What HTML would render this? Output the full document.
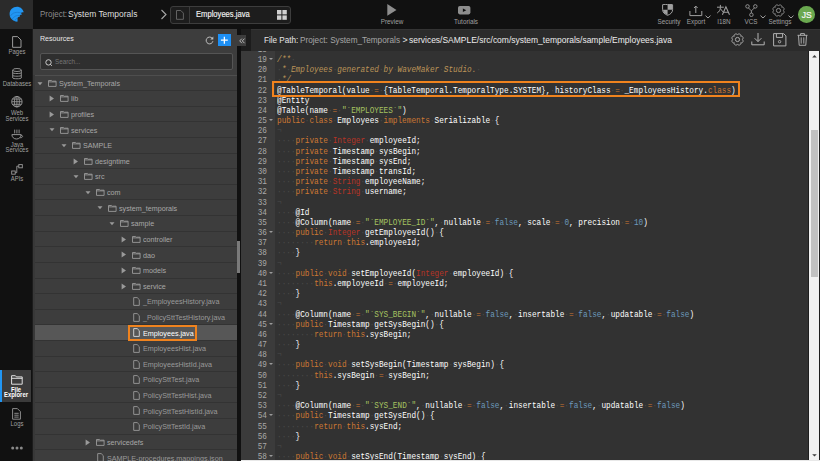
<!DOCTYPE html>
<html><head><meta charset="utf-8"><style>
*{box-sizing:border-box}
html,body{margin:0;padding:0}
body{width:820px;height:461px;overflow:hidden;position:relative;background:#111;font-family:"Liberation Sans",sans-serif}
.a{position:absolute}
.t{position:absolute;white-space:nowrap;line-height:1}
#top{left:0;top:0;width:820px;height:29px;background:#111}
#logo{left:0;top:0;width:33px;height:29px;background:#2b2b2b}
#side{left:0;top:29px;width:32px;height:432px;background:#111}
#sideb{left:32px;top:29px;width:1px;height:432px;background:#1c1c1c}
#panel{left:33px;top:29px;width:204px;height:432px;background:#3d3d3d;overflow:hidden}
.tr{position:absolute;left:2px;width:202px;border-top:1px solid #333}
.tr.sel{background:#575757}
.tt{position:absolute;white-space:nowrap;line-height:1;font-size:7.80px;transform-origin:0 0;transform:scaleX(0.92)}
.ic{position:absolute;overflow:visible}
.selbox{position:absolute;z-index:2;left:95px;width:69.3px;height:15.9px;border:2.1px solid #f0831e}
#pscroll{left:237px;top:29px;width:4px;height:432px;background:#111}
#pthumb{left:237.3px;top:241.2px;width:3px;height:31.4px;background:#7a7a7a}
#fp0{left:241px;top:29px;width:10px;height:22px;background:#1c1c1c}
#fp{left:251px;top:29px;width:569px;height:22px;background:#2b2b2b}
#coll{left:237px;top:35px;width:9px;height:11px;background:#3d3d3d}
#gutter{left:241px;top:51px;width:34px;height:410px;background:#3b3b3b;overflow:hidden}
#code{left:275px;top:51px;width:533px;height:410px;background:#323232;overflow:hidden}
.cl{position:absolute;left:2px;white-space:pre;font-family:"Liberation Mono",monospace;font-size:7.721px;line-height:10.180px;height:10.180px;color:#fff;transform-origin:0 7.15px;transform:scaleY(1.18)}
.iv{color:#4a4a4a}
.gl{position:absolute;right:8.1px;width:30px;text-align:right;font-family:"Liberation Mono",monospace;font-size:7.721px;line-height:10.180px;color:#a9a9a9;transform-origin:0 7.15px;transform:scaleY(1.15)}
.fw{position:absolute;left:27.8px;width:0;height:0;border-left:2.1px solid transparent;border-right:2.1px solid transparent;border-top:2.3px solid #9a9a9a}
#vs{left:808px;top:51px;width:12px;height:410px;background:#f1f1f1;border-left:1px solid #1e1e1e;border-right:1px solid #1e1e1e}
#vthumb{left:810.5px;top:130px;width:7.3px;height:146.5px;background:#c1c1c1}
#hs{left:241px;top:459.5px;width:579px;height:2px;background:#e8e8e8}
.lbl{position:absolute;white-space:nowrap;line-height:1;font-size:6.6px;color:#a0a0a0;text-align:center;transform-origin:50% 0;transform:scaleX(0.9)}
</style></head><body>
<div class="a" id="top"></div>
<div class="a" id="logo"></div>
<svg class="a" style="left:7px;top:4px" width="20" height="20" viewBox="0 0 20 20">
<path d="M10.4 17.8 C6 17.3 2.6 14.2 2.6 10 C2.6 5.9 5.9 2.8 10 2.8 C13.2 2.8 15.8 5 16.7 8.3 C15.6 8 14.6 8.3 13.9 8.9 C14.4 9.2 14.8 9.8 15 10.4 C14.1 10.4 13.2 10.8 12.6 11.5 C12.9 11.8 13 12.2 13 12.6 C11.8 12.7 10.9 13.4 10.4 14.3 C10.7 15.4 10.7 16.7 10.4 17.8Z" fill="#2196f3"/>
<path d="M3.4 12.2 C5.2 8.6 9.5 7.6 13.9 8.9 M5.2 15.1 C6.7 12.5 9.6 11.1 12.6 11.5 M7.6 16.8 C8.4 15.3 9.3 14.5 10.4 14.3" fill="none" stroke="#1878cc" stroke-width="0.75"/>
</svg>
<div class="t" style="left:39.5px;top:10.2px;font-size:8.9px;color:#8c8c8c;transform-origin:0 0;transform:scaleX(0.9)">Project:</div><div class="t" style="left:68px;top:10.2px;font-size:8.9px;color:#dedede;transform-origin:0 0;transform:scaleX(0.953)">System Temporals</div>
<svg class="a" style="left:160px;top:9px" width="8" height="11" viewBox="0 0 8 11"><path d="M1.5 1 L6 5.5 L1.5 10" fill="none" stroke="#a8a8a8" stroke-width="1.1"/></svg>
<div class="a" style="left:170px;top:6px;width:121px;height:18px;background:#1d1d1d;border:1px solid #3d3d3d;border-radius:3px"></div>
<div class="a" style="left:189px;top:7px;width:1px;height:16px;background:#3b3b3b"></div>
<svg class="a" style="left:176.2px;top:9.9px" width="8" height="10" viewBox="0 0 8 10"><path d="M0.5 0.5 H4.8 L7.4 3.1 V9.3 H0.5Z" fill="none" stroke="#6a6a6a" stroke-width="0.9"/></svg>
<div class="t" style="left:195.5px;top:11px;font-size:8.2px;color:#f2f2f2;-webkit-text-stroke:0.15px #f2f2f2;transform-origin:0 0;transform:scaleX(0.93)">Employees.java</div>
<svg class="a" style="left:277px;top:10px" width="10" height="10" viewBox="0 0 10 10"><rect x="0" y="0" width="4.4" height="4.4" fill="#cfcfcf"/><rect x="5.4" y="0" width="4.4" height="4.4" fill="#cfcfcf"/><rect x="0" y="5.4" width="4.4" height="4.4" fill="#cfcfcf"/><rect x="5.4" y="5.4" width="4.4" height="4.4" fill="#cfcfcf"/></svg>
<!-- preview / tutorials -->
<svg class="a" style="left:386.5px;top:4.3px" width="10" height="12" viewBox="0 0 10 12"><path d="M0.3 0 L9.5 5.9 L0.3 11.8Z" fill="#8e8e8e"/></svg>
<div class="lbl" style="left:372px;top:18.6px;width:40px;transform:scaleX(0.96)">Preview</div>
<svg class="a" style="left:457.6px;top:6.3px" width="13" height="9" viewBox="0 0 13 9"><rect x="0" y="0" width="12.4" height="8.4" rx="1.8" fill="#8e8e8e"/><path d="M4.9 2.5 L8.3 4.2 L4.9 5.9Z" fill="#111"/></svg>
<div class="lbl" style="left:446px;top:18.6px;width:40px;transform:scaleX(0.96)">Tutorials</div>
<!-- right icons -->
<svg class="a" style="left:662.3px;top:4.4px" width="12" height="12" viewBox="0 0 12 12"><path d="M0.6 0.7 C2.5 0.4 4 0.2 5.6 0.6 C7.2 0.2 8.7 0.4 10.6 0.7 V5.6 C10.6 8.4 8.6 10.3 5.6 11.3 C2.6 10.3 0.6 8.4 0.6 5.6Z" fill="none" stroke="#a0a0a0" stroke-width="1"/><path d="M5.6 0.8 C7.2 0.4 8.7 0.5 10.2 0.9 V5.7 H5.6Z M1 5.7 H5.6 V10.9 C3 9.9 1 8.3 1 5.7Z" fill="#a0a0a0"/></svg>
<div class="lbl" style="left:649px;top:19px;width:40px;transform:scaleX(0.96)">Security</div>
<svg class="a" style="left:689px;top:5px" width="14" height="12" viewBox="0 0 14 12"><path d="M0.9 6 V10.6 H12.8 V6" fill="none" stroke="#a0a0a0" stroke-width="1"/><path d="M6.8 8 V1.2 M5 3 L6.8 1.1 L8.6 3" fill="none" stroke="#a0a0a0" stroke-width="1"/></svg>
<svg class="a" style="left:705px;top:14.6px" width="6" height="4" viewBox="0 0 6 4"><path d="M0.5 0.6 L3 3 L5.5 0.6" fill="none" stroke="#a0a0a0" stroke-width="1"/></svg>
<div class="lbl" style="left:675.5px;top:19px;width:40px;transform:scaleX(0.96)">Export</div>
<svg class="a" style="left:716px;top:4px" width="15" height="12" viewBox="0 0 15 12"><path d="M1 3.2 H7.8 M4.4 0.9 V3.6 C4.3 6 3.2 7.8 1.2 9 M4.6 4.8 C5.3 6.3 6.3 7.4 7.6 8.2" fill="none" stroke="#a0a0a0" stroke-width="1"/><path d="M6.4 10.8 L9.9 2.7 L13.5 10.8 M7.6 8.3 H12.3" fill="none" stroke="#a0a0a0" stroke-width="1.05"/></svg>
<div class="lbl" style="left:703.5px;top:19px;width:40px;transform:scaleX(0.96)">I18N</div>
<svg class="a" style="left:744.5px;top:3.5px" width="13" height="13" viewBox="0 0 13 13"><circle cx="2.5" cy="2.4" r="1.75" fill="none" stroke="#9a9a9a" stroke-width="0.9"/><circle cx="10.3" cy="2.4" r="1.75" fill="none" stroke="#9a9a9a" stroke-width="0.9"/><circle cx="6.4" cy="10.8" r="1.75" fill="none" stroke="#9a9a9a" stroke-width="0.9"/><path d="M3.4 3.9 L6.4 6.9 L9.4 3.9 M6.4 6.9 V9" fill="none" stroke="#9a9a9a" stroke-width="0.9"/></svg>
<svg class="a" style="left:759.5px;top:14.6px" width="6" height="4" viewBox="0 0 6 4"><path d="M0.5 0.6 L3 3 L5.5 0.6" fill="none" stroke="#a0a0a0" stroke-width="1"/></svg>
<div class="lbl" style="left:731px;top:19px;width:40px;transform:scaleX(0.96)">VCS</div>
<svg class="a" style="left:772px;top:3.5px" width="13" height="13" viewBox="0 0 13 13"><path d="M11.10 6.50 L11.59 6.83 L11.85 7.20 L12.01 7.60 L12.08 7.99 L12.06 8.39 L11.95 8.76 L11.76 9.10 L11.50 9.39 L11.17 9.62 L10.78 9.79 L10.34 9.87 L9.75 9.75 L9.87 10.34 L9.79 10.78 L9.62 11.17 L9.39 11.50 L9.10 11.76 L8.76 11.95 L8.39 12.06 L7.99 12.08 L7.60 12.01 L7.20 11.85 L6.83 11.59 L6.50 11.10 L6.17 11.59 L5.80 11.85 L5.40 12.01 L5.01 12.08 L4.61 12.06 L4.24 11.95 L3.90 11.76 L3.61 11.50 L3.38 11.17 L3.21 10.78 L3.13 10.34 L3.25 9.75 L2.66 9.87 L2.22 9.79 L1.83 9.62 L1.50 9.39 L1.24 9.10 L1.05 8.76 L0.94 8.39 L0.92 7.99 L0.99 7.60 L1.15 7.20 L1.41 6.83 L1.90 6.50 L1.41 6.17 L1.15 5.80 L0.99 5.40 L0.92 5.01 L0.94 4.61 L1.05 4.24 L1.24 3.90 L1.50 3.61 L1.83 3.38 L2.22 3.21 L2.66 3.13 L3.25 3.25 L3.13 2.66 L3.21 2.22 L3.38 1.83 L3.61 1.50 L3.90 1.24 L4.24 1.05 L4.61 0.94 L5.01 0.92 L5.40 0.99 L5.80 1.15 L6.17 1.41 L6.50 1.90 L6.83 1.41 L7.20 1.15 L7.60 0.99 L7.99 0.92 L8.39 0.94 L8.76 1.05 L9.10 1.24 L9.39 1.50 L9.62 1.83 L9.79 2.22 L9.87 2.66 L9.75 3.25 L10.34 3.13 L10.78 3.21 L11.17 3.38 L11.50 3.61 L11.76 3.90 L11.95 4.24 L12.06 4.61 L12.08 5.01 L12.01 5.40 L11.85 5.80 L11.59 6.17Z" fill="none" stroke="#9a9a9a" stroke-width="0.9" stroke-linejoin="round"/><circle cx="6.5" cy="6.5" r="2.1" fill="none" stroke="#9a9a9a" stroke-width="0.9"/></svg>
<svg class="a" style="left:787.5px;top:14.6px" width="6" height="4" viewBox="0 0 6 4"><path d="M0.5 0.6 L3 3 L5.5 0.6" fill="none" stroke="#a0a0a0" stroke-width="1"/></svg>
<div class="lbl" style="left:760px;top:19px;width:40px;transform:scaleX(0.96)">Settings</div>
<div class="a" style="left:798.3px;top:6.3px;width:16.6px;height:16.6px;border-radius:50%;background:#6aa84f"></div>
<div class="t" style="left:798.3px;top:11.2px;width:16.6px;text-align:center;font-size:8.5px;color:#f7f7f7;-webkit-text-stroke:0.2px #f7f7f7">JS</div>

<!-- sidebar -->
<div class="a" id="side"></div>
<div class="a" id="sideb"></div>
<svg class="a" style="left:12px;top:35.8px" width="10" height="12" viewBox="0 0 10 12"><path d="M0.6 0.6 H5.6 L9 4 V11.3 H0.6Z" fill="none" stroke="#9a9a9a" stroke-width="1"/></svg>
<div class="lbl" style="left:-4px;top:48.8px;width:42px">Pages</div>
<svg class="a" style="left:12px;top:68px" width="10" height="12" viewBox="0 0 10 12"><ellipse cx="5" cy="2" rx="4.3" ry="1.5" fill="none" stroke="#9a9a9a" stroke-width="0.9"/><path d="M0.7 2 V10 C0.7 11 9.3 11 9.3 10 V2 M0.7 4.7 C0.7 5.8 9.3 5.8 9.3 4.7 M0.7 7.4 C0.7 8.5 9.3 8.5 9.3 7.4" fill="none" stroke="#9a9a9a" stroke-width="0.9"/></svg>
<div class="lbl" style="left:-4px;top:80.9px;width:42px">Databases</div>
<svg class="a" style="left:10.8px;top:96.4px" width="12" height="12" viewBox="0 0 12 12"><circle cx="5.9" cy="5.7" r="5.2" fill="none" stroke="#a0a0a0" stroke-width="0.9"/><ellipse cx="5.9" cy="5.7" rx="2.5" ry="5.2" fill="none" stroke="#a0a0a0" stroke-width="0.8"/><path d="M0.9 5.7 H10.9 M1.4 3.1 H10.4 M1.4 8.3 H10.4 M5.9 0.5 V10.9" fill="none" stroke="#a0a0a0" stroke-width="0.8"/></svg>
<div class="lbl" style="left:-4px;top:109.6px;width:42px">Web</div>
<div class="lbl" style="left:-4px;top:115.6px;width:42px">Services</div>
<svg class="a" style="left:10.5px;top:128.5px" width="13" height="12" viewBox="0 0 13 12"><path d="M3.7 0.6 V4.4 M5.9 0.6 V4.4 M8.1 0.6 V4.4" fill="none" stroke="#9a9a9a" stroke-width="0.9"/><path d="M0.9 5.6 H10.1 C10.1 8.2 8.1 10 5.5 10 C2.9 10 0.9 8.2 0.9 5.6Z" fill="none" stroke="#9a9a9a" stroke-width="0.95"/><path d="M10 6.2 C12.2 6.2 12.2 8.8 9.2 8.8" fill="none" stroke="#9a9a9a" stroke-width="0.9"/></svg>
<div class="lbl" style="left:-4px;top:141.9px;width:42px">Java</div>
<div class="lbl" style="left:-4px;top:147.4px;width:42px">Services</div>
<svg class="a" style="left:11px;top:164px" width="12" height="11" viewBox="0 0 12 11"><rect x="7.8" y="0.6" width="3.5" height="3.2" fill="none" stroke="#9a9a9a" stroke-width="0.9"/><rect x="0.7" y="7" width="3.5" height="3.2" fill="none" stroke="#9a9a9a" stroke-width="0.9"/><path d="M7.8 2.2 H5.8 V8.6 H4.2" fill="none" stroke="#9a9a9a" stroke-width="0.9"/></svg>
<div class="lbl" style="left:-4px;top:176.2px;width:42px">APIs</div>
<div class="a" style="left:0;top:369.8px;width:31px;height:31.8px;background:#3b3b3b"></div>
<div class="a" style="left:0;top:369.8px;width:1.6px;height:31.8px;background:#2196f3"></div>
<svg class="a" style="left:10.5px;top:375px" width="12" height="10" viewBox="0 0 12 10"><path d="M0.6 0.7 H4.4 L5.4 1.9 H11.2 V9.2 H0.6Z M0.6 3.3 H11.2" fill="none" stroke="#f0f0f0" stroke-width="0.9"/></svg>
<div class="lbl" style="left:-5.5px;top:387px;width:42px;color:#fff;font-weight:bold">File</div>
<div class="lbl" style="left:-5.5px;top:392px;width:42px;color:#fff;font-weight:bold">Explorer</div>
<svg class="a" style="left:12px;top:407.5px" width="9" height="12" viewBox="0 0 9 12"><path d="M0.6 0.6 H5.4 L8.4 3.6 V11.2 H0.6Z M2.3 5.3 H6.7 M2.3 7.2 H6.7 M2.3 9.1 H6.7" fill="none" stroke="#9a9a9a" stroke-width="0.9"/></svg>
<div class="lbl" style="left:-4.5px;top:420.8px;width:42px">Logs</div>
<svg class="a" style="left:11px;top:445.5px" width="12" height="4" viewBox="0 0 12 4"><circle cx="1.7" cy="2" r="1.5" fill="#8a8a8a"/><circle cx="6" cy="2" r="1.5" fill="#8a8a8a"/><circle cx="10.3" cy="2" r="1.5" fill="#8a8a8a"/></svg>

<!-- panel -->
<div class="a" id="panel">
<div class="t" style="left:7.4px;top:6.1px;font-size:7.6px;color:#e8e8e8;transform-origin:0 0;transform:scaleX(0.93)">Resources</div>
<svg class="a" style="left:172px;top:7px" width="9" height="9" viewBox="0 0 9 9"><path d="M7.1 2.2 A3.4 3.4 0 1 0 7.9 5.2" fill="none" stroke="#c4c4c4" stroke-width="0.95"/><path d="M8.3 0.6 V3.6 H5.3Z" fill="#c4c4c4"/></svg>
<div class="a" style="left:185.4px;top:4.7px;width:12.7px;height:12.4px;background:#1e90f5"></div>
<svg class="a" style="left:185.4px;top:4.7px" width="13" height="13" viewBox="0 0 13 13"><path d="M6.35 2.7 V9.7 M2.9 6.2 H9.8" stroke="#fff" stroke-width="1.25"/></svg>
<div class="a" style="left:6.5px;top:24px;width:193px;height:16.6px;background:#2f2f2f;border:1px solid #555;border-radius:2px"></div>
<svg class="a" style="left:12px;top:30px" width="8" height="8" viewBox="0 0 8 8"><circle cx="3.5" cy="3.4" r="2.7" fill="none" stroke="#d0d0d0" stroke-width="0.95"/><path d="M5.3 5.2 L6.8 6.8" stroke="#d0d0d0" stroke-width="1"/></svg>
<div class="t" style="left:22px;top:28.8px;font-size:7.2px;color:#757575;transform-origin:0 0;transform:scaleX(0.88)">Search...</div>
<div class="a" style="left:2px;top:45.8px;width:202px;height:1.2px;background:#4e4e4e"></div>
<div class="a" style="left:0px;top:46px;width:2px;height:386px;background:#383838"></div>
<div class="tr" style="top:45.56px;height:15.61px;border-top:0"></div>
<div class="tt" style="left:25.80px;top:50.80px;color:#a8a8a8">System_Temporals</div>
<svg class="ic" style="left:4.30px;top:51.56px" width="6" height="5" viewBox="0 0 6 5"><path d="M0.5 1.2 L5.5 1.2 L3 4.2Z" fill="#9a9a9a"/></svg>
<svg class="ic" style="left:14.90px;top:50.76px" width="9" height="7" viewBox="0 0 9 7"><path d="M0.5 0.5 H3.6 L4.3 1.2 H8.1 V6.4 H0.5Z M0.5 1.9 H8.1" fill="none" stroke="#9a9a9a" stroke-width="0.9"/></svg>
<div class="tr" style="top:61.17px;height:15.61px"></div>
<div class="tt" style="left:37.77px;top:66.41px;color:#a8a8a8">lib</div>
<svg class="ic" style="left:16.47px;top:66.17px" width="6" height="7" viewBox="0 0 6 7"><path d="M0.6 0.4 L5 3.5 L0.6 6.6Z" fill="#9a9a9a"/></svg>
<svg class="ic" style="left:26.87px;top:66.37px" width="9" height="7" viewBox="0 0 9 7"><path d="M0.5 0.5 H3.6 L4.3 1.2 H8.1 V6.4 H0.5Z M0.5 1.9 H8.1" fill="none" stroke="#9a9a9a" stroke-width="0.9"/></svg>
<div class="tr" style="top:76.79px;height:15.61px"></div>
<div class="tt" style="left:37.77px;top:82.02px;color:#a8a8a8">profiles</div>
<svg class="ic" style="left:16.47px;top:81.79px" width="6" height="7" viewBox="0 0 6 7"><path d="M0.6 0.4 L5 3.5 L0.6 6.6Z" fill="#9a9a9a"/></svg>
<svg class="ic" style="left:26.87px;top:81.99px" width="9" height="7" viewBox="0 0 9 7"><path d="M0.5 0.5 H3.6 L4.3 1.2 H8.1 V6.4 H0.5Z M0.5 1.9 H8.1" fill="none" stroke="#9a9a9a" stroke-width="0.9"/></svg>
<div class="tr" style="top:92.40px;height:15.61px"></div>
<div class="tt" style="left:37.77px;top:97.64px;color:#a8a8a8">services</div>
<svg class="ic" style="left:16.27px;top:98.40px" width="6" height="5" viewBox="0 0 6 5"><path d="M0.5 1.2 L5.5 1.2 L3 4.2Z" fill="#9a9a9a"/></svg>
<svg class="ic" style="left:26.87px;top:97.60px" width="9" height="7" viewBox="0 0 9 7"><path d="M0.5 0.5 H3.6 L4.3 1.2 H8.1 V6.4 H0.5Z M0.5 1.9 H8.1" fill="none" stroke="#9a9a9a" stroke-width="0.9"/></svg>
<div class="tr" style="top:108.01px;height:15.61px"></div>
<div class="tt" style="left:49.74px;top:113.25px;color:#a8a8a8">SAMPLE</div>
<svg class="ic" style="left:28.24px;top:114.01px" width="6" height="5" viewBox="0 0 6 5"><path d="M0.5 1.2 L5.5 1.2 L3 4.2Z" fill="#9a9a9a"/></svg>
<svg class="ic" style="left:38.84px;top:113.21px" width="9" height="7" viewBox="0 0 9 7"><path d="M0.5 0.5 H3.6 L4.3 1.2 H8.1 V6.4 H0.5Z M0.5 1.9 H8.1" fill="none" stroke="#9a9a9a" stroke-width="0.9"/></svg>
<div class="tr" style="top:123.62px;height:15.61px"></div>
<div class="tt" style="left:61.71px;top:128.86px;color:#a8a8a8">designtime</div>
<svg class="ic" style="left:40.41px;top:128.62px" width="6" height="7" viewBox="0 0 6 7"><path d="M0.6 0.4 L5 3.5 L0.6 6.6Z" fill="#9a9a9a"/></svg>
<svg class="ic" style="left:50.81px;top:128.82px" width="9" height="7" viewBox="0 0 9 7"><path d="M0.5 0.5 H3.6 L4.3 1.2 H8.1 V6.4 H0.5Z M0.5 1.9 H8.1" fill="none" stroke="#9a9a9a" stroke-width="0.9"/></svg>
<div class="tr" style="top:139.24px;height:15.61px"></div>
<div class="tt" style="left:61.71px;top:144.48px;color:#a8a8a8">src</div>
<svg class="ic" style="left:40.21px;top:145.24px" width="6" height="5" viewBox="0 0 6 5"><path d="M0.5 1.2 L5.5 1.2 L3 4.2Z" fill="#9a9a9a"/></svg>
<svg class="ic" style="left:50.81px;top:144.44px" width="9" height="7" viewBox="0 0 9 7"><path d="M0.5 0.5 H3.6 L4.3 1.2 H8.1 V6.4 H0.5Z M0.5 1.9 H8.1" fill="none" stroke="#9a9a9a" stroke-width="0.9"/></svg>
<div class="tr" style="top:154.85px;height:15.61px"></div>
<div class="tt" style="left:73.68px;top:160.09px;color:#a8a8a8">com</div>
<svg class="ic" style="left:52.18px;top:160.85px" width="6" height="5" viewBox="0 0 6 5"><path d="M0.5 1.2 L5.5 1.2 L3 4.2Z" fill="#9a9a9a"/></svg>
<svg class="ic" style="left:62.78px;top:160.05px" width="9" height="7" viewBox="0 0 9 7"><path d="M0.5 0.5 H3.6 L4.3 1.2 H8.1 V6.4 H0.5Z M0.5 1.9 H8.1" fill="none" stroke="#9a9a9a" stroke-width="0.9"/></svg>
<div class="tr" style="top:170.46px;height:15.61px"></div>
<div class="tt" style="left:85.65px;top:175.70px;color:#a8a8a8">system_temporals</div>
<svg class="ic" style="left:64.15px;top:176.46px" width="6" height="5" viewBox="0 0 6 5"><path d="M0.5 1.2 L5.5 1.2 L3 4.2Z" fill="#9a9a9a"/></svg>
<svg class="ic" style="left:74.75px;top:175.66px" width="9" height="7" viewBox="0 0 9 7"><path d="M0.5 0.5 H3.6 L4.3 1.2 H8.1 V6.4 H0.5Z M0.5 1.9 H8.1" fill="none" stroke="#9a9a9a" stroke-width="0.9"/></svg>
<div class="tr" style="top:186.08px;height:15.61px"></div>
<div class="tt" style="left:97.62px;top:191.31px;color:#a8a8a8">sample</div>
<svg class="ic" style="left:76.12px;top:192.08px" width="6" height="5" viewBox="0 0 6 5"><path d="M0.5 1.2 L5.5 1.2 L3 4.2Z" fill="#9a9a9a"/></svg>
<svg class="ic" style="left:86.72px;top:191.28px" width="9" height="7" viewBox="0 0 9 7"><path d="M0.5 0.5 H3.6 L4.3 1.2 H8.1 V6.4 H0.5Z M0.5 1.9 H8.1" fill="none" stroke="#9a9a9a" stroke-width="0.9"/></svg>
<div class="tr" style="top:201.69px;height:15.61px"></div>
<div class="tt" style="left:109.59px;top:206.93px;color:#a8a8a8">controller</div>
<svg class="ic" style="left:88.29px;top:206.69px" width="6" height="7" viewBox="0 0 6 7"><path d="M0.6 0.4 L5 3.5 L0.6 6.6Z" fill="#9a9a9a"/></svg>
<svg class="ic" style="left:98.69px;top:206.89px" width="9" height="7" viewBox="0 0 9 7"><path d="M0.5 0.5 H3.6 L4.3 1.2 H8.1 V6.4 H0.5Z M0.5 1.9 H8.1" fill="none" stroke="#9a9a9a" stroke-width="0.9"/></svg>
<div class="tr" style="top:217.30px;height:15.61px"></div>
<div class="tt" style="left:109.59px;top:222.54px;color:#a8a8a8">dao</div>
<svg class="ic" style="left:88.29px;top:222.30px" width="6" height="7" viewBox="0 0 6 7"><path d="M0.6 0.4 L5 3.5 L0.6 6.6Z" fill="#9a9a9a"/></svg>
<svg class="ic" style="left:98.69px;top:222.50px" width="9" height="7" viewBox="0 0 9 7"><path d="M0.5 0.5 H3.6 L4.3 1.2 H8.1 V6.4 H0.5Z M0.5 1.9 H8.1" fill="none" stroke="#9a9a9a" stroke-width="0.9"/></svg>
<div class="tr" style="top:232.92px;height:15.61px"></div>
<div class="tt" style="left:109.59px;top:238.15px;color:#a8a8a8">models</div>
<svg class="ic" style="left:88.29px;top:237.92px" width="6" height="7" viewBox="0 0 6 7"><path d="M0.6 0.4 L5 3.5 L0.6 6.6Z" fill="#9a9a9a"/></svg>
<svg class="ic" style="left:98.69px;top:238.12px" width="9" height="7" viewBox="0 0 9 7"><path d="M0.5 0.5 H3.6 L4.3 1.2 H8.1 V6.4 H0.5Z M0.5 1.9 H8.1" fill="none" stroke="#9a9a9a" stroke-width="0.9"/></svg>
<div class="tr" style="top:248.53px;height:15.61px"></div>
<div class="tt" style="left:109.59px;top:253.77px;color:#a8a8a8">service</div>
<svg class="ic" style="left:88.29px;top:253.53px" width="6" height="7" viewBox="0 0 6 7"><path d="M0.6 0.4 L5 3.5 L0.6 6.6Z" fill="#9a9a9a"/></svg>
<svg class="ic" style="left:98.69px;top:253.73px" width="9" height="7" viewBox="0 0 9 7"><path d="M0.5 0.5 H3.6 L4.3 1.2 H8.1 V6.4 H0.5Z M0.5 1.9 H8.1" fill="none" stroke="#9a9a9a" stroke-width="0.9"/></svg>
<div class="tr" style="top:264.14px;height:15.61px"></div>
<div class="tt" style="left:109.59px;top:269.38px;color:#9a9a9a">_EmployeesHistory.java</div>
<svg class="ic" style="left:99.59px;top:268.14px" width="7" height="9" viewBox="0 0 7 9"><path d="M0.7 0.6 H4.2 L6.3 2.7 V8.4 H0.7Z" fill="none" stroke="#9a9a9a" stroke-width="0.9"/></svg>
<div class="tr" style="top:279.75px;height:15.61px"></div>
<div class="tt" style="left:109.59px;top:284.99px;color:#9a9a9a">_PolicySttTestHistory.java</div>
<svg class="ic" style="left:99.59px;top:283.75px" width="7" height="9" viewBox="0 0 7 9"><path d="M0.7 0.6 H4.2 L6.3 2.7 V8.4 H0.7Z" fill="none" stroke="#9a9a9a" stroke-width="0.9"/></svg>
<div class="tr sel" style="top:295.37px;height:15.61px"></div>
<div class="tt" style="left:109.59px;top:300.61px;color:#fff">Employees.java</div>
<svg class="ic" style="left:99.59px;top:299.37px" width="7" height="9" viewBox="0 0 7 9"><path d="M0.7 0.6 H4.2 L6.3 2.7 V8.4 H0.7Z" fill="none" stroke="#ddd" stroke-width="0.9"/></svg>
<div class="selbox" style="top:296.27px"></div>
<div class="tr" style="top:310.98px;height:15.61px"></div>
<div class="tt" style="left:109.59px;top:316.22px;color:#9a9a9a">EmployeesHist.java</div>
<svg class="ic" style="left:99.59px;top:314.98px" width="7" height="9" viewBox="0 0 7 9"><path d="M0.7 0.6 H4.2 L6.3 2.7 V8.4 H0.7Z" fill="none" stroke="#9a9a9a" stroke-width="0.9"/></svg>
<div class="tr" style="top:326.59px;height:15.61px"></div>
<div class="tt" style="left:109.59px;top:331.83px;color:#9a9a9a">EmployeesHistId.java</div>
<svg class="ic" style="left:99.59px;top:330.59px" width="7" height="9" viewBox="0 0 7 9"><path d="M0.7 0.6 H4.2 L6.3 2.7 V8.4 H0.7Z" fill="none" stroke="#9a9a9a" stroke-width="0.9"/></svg>
<div class="tr" style="top:342.21px;height:15.61px"></div>
<div class="tt" style="left:109.59px;top:347.44px;color:#9a9a9a">PolicySttTest.java</div>
<svg class="ic" style="left:99.59px;top:346.21px" width="7" height="9" viewBox="0 0 7 9"><path d="M0.7 0.6 H4.2 L6.3 2.7 V8.4 H0.7Z" fill="none" stroke="#9a9a9a" stroke-width="0.9"/></svg>
<div class="tr" style="top:357.82px;height:15.61px"></div>
<div class="tt" style="left:109.59px;top:363.06px;color:#9a9a9a">PolicySttTestHist.java</div>
<svg class="ic" style="left:99.59px;top:361.82px" width="7" height="9" viewBox="0 0 7 9"><path d="M0.7 0.6 H4.2 L6.3 2.7 V8.4 H0.7Z" fill="none" stroke="#9a9a9a" stroke-width="0.9"/></svg>
<div class="tr" style="top:373.43px;height:15.61px"></div>
<div class="tt" style="left:109.59px;top:378.67px;color:#9a9a9a">PolicySttTestHistId.java</div>
<svg class="ic" style="left:99.59px;top:377.43px" width="7" height="9" viewBox="0 0 7 9"><path d="M0.7 0.6 H4.2 L6.3 2.7 V8.4 H0.7Z" fill="none" stroke="#9a9a9a" stroke-width="0.9"/></svg>
<div class="tr" style="top:389.05px;height:15.61px"></div>
<div class="tt" style="left:109.59px;top:394.28px;color:#9a9a9a">PolicySttTestId.java</div>
<svg class="ic" style="left:99.59px;top:393.05px" width="7" height="9" viewBox="0 0 7 9"><path d="M0.7 0.6 H4.2 L6.3 2.7 V8.4 H0.7Z" fill="none" stroke="#9a9a9a" stroke-width="0.9"/></svg>
<div class="tr" style="top:404.66px;height:15.61px"></div>
<div class="tt" style="left:73.68px;top:409.90px;color:#a8a8a8">servicedefs</div>
<svg class="ic" style="left:52.38px;top:409.66px" width="6" height="7" viewBox="0 0 6 7"><path d="M0.6 0.4 L5 3.5 L0.6 6.6Z" fill="#9a9a9a"/></svg>
<svg class="ic" style="left:62.78px;top:409.86px" width="9" height="7" viewBox="0 0 9 7"><path d="M0.5 0.5 H3.6 L4.3 1.2 H8.1 V6.4 H0.5Z M0.5 1.9 H8.1" fill="none" stroke="#9a9a9a" stroke-width="0.9"/></svg>
<div class="tr" style="top:420.27px;height:15.61px"></div>
<div class="tt" style="left:73.68px;top:425.51px;color:#9a9a9a">SAMPLE-procedures.mappings.json</div>
<svg class="ic" style="left:63.68px;top:424.27px" width="7" height="9" viewBox="0 0 7 9"><path d="M0.7 0.6 H4.2 L6.3 2.7 V8.4 H0.7Z" fill="none" stroke="#9a9a9a" stroke-width="0.9"/></svg>
</div>
<div class="a" id="pscroll"></div>
<div class="a" id="pthumb"></div>

<!-- editor header -->
<div class="a" id="fp0"></div>
<div class="a" id="fp"></div>
<div class="a" id="coll"></div>
<div class="a" style="left:251px;top:29px;width:569px;height:1px;background:#343434"></div>
<svg class="a" style="left:238.5px;top:38px" width="7" height="6" viewBox="0 0 7 6"><path d="M2.9 0.6 L0.7 2.9 L2.9 5.2 M5.5 0.6 L3.3 2.9 L5.5 5.2" fill="none" stroke="#cfcfcf" stroke-width="0.85"/></svg>
<div class="t" style="left:263.5px;top:35.5px;font-size:8.8px;color:#e6e6e6;transform-origin:0 0;transform:scaleX(0.923)">File Path:</div>
<div class="t" style="left:299.8px;top:35.5px;font-size:8.8px;color:#a6a6a6;transform-origin:0 0;transform:scaleX(0.934)">Project: System_Temporals</div>
<div class="t" style="left:402.4px;top:35.5px;font-size:8.8px;color:#e6e6e6">&gt;</div>
<div class="t" style="left:408.8px;top:35.5px;font-size:8.8px;color:#ececec;transform-origin:0 0;transform:scaleX(0.964)">services/SAMPLE/src/com/system_temporals/sample/Employees.java</div>
<svg class="a" style="left:730.5px;top:32.5px" width="13" height="13" viewBox="0 0 13 13"><path d="M11.10 6.50 L11.59 6.83 L11.85 7.20 L12.01 7.60 L12.08 7.99 L12.06 8.39 L11.95 8.76 L11.76 9.10 L11.50 9.39 L11.17 9.62 L10.78 9.79 L10.34 9.87 L9.75 9.75 L9.87 10.34 L9.79 10.78 L9.62 11.17 L9.39 11.50 L9.10 11.76 L8.76 11.95 L8.39 12.06 L7.99 12.08 L7.60 12.01 L7.20 11.85 L6.83 11.59 L6.50 11.10 L6.17 11.59 L5.80 11.85 L5.40 12.01 L5.01 12.08 L4.61 12.06 L4.24 11.95 L3.90 11.76 L3.61 11.50 L3.38 11.17 L3.21 10.78 L3.13 10.34 L3.25 9.75 L2.66 9.87 L2.22 9.79 L1.83 9.62 L1.50 9.39 L1.24 9.10 L1.05 8.76 L0.94 8.39 L0.92 7.99 L0.99 7.60 L1.15 7.20 L1.41 6.83 L1.90 6.50 L1.41 6.17 L1.15 5.80 L0.99 5.40 L0.92 5.01 L0.94 4.61 L1.05 4.24 L1.24 3.90 L1.50 3.61 L1.83 3.38 L2.22 3.21 L2.66 3.13 L3.25 3.25 L3.13 2.66 L3.21 2.22 L3.38 1.83 L3.61 1.50 L3.90 1.24 L4.24 1.05 L4.61 0.94 L5.01 0.92 L5.40 0.99 L5.80 1.15 L6.17 1.41 L6.50 1.90 L6.83 1.41 L7.20 1.15 L7.60 0.99 L7.99 0.92 L8.39 0.94 L8.76 1.05 L9.10 1.24 L9.39 1.50 L9.62 1.83 L9.79 2.22 L9.87 2.66 L9.75 3.25 L10.34 3.13 L10.78 3.21 L11.17 3.38 L11.50 3.61 L11.76 3.90 L11.95 4.24 L12.06 4.61 L12.08 5.01 L12.01 5.40 L11.85 5.80 L11.59 6.17Z" fill="none" stroke="#b0b0b0" stroke-width="0.95" stroke-linejoin="round"/><circle cx="6.5" cy="6.5" r="2.1" fill="none" stroke="#b0b0b0" stroke-width="0.95"/></svg>
<svg class="a" style="left:751px;top:32px" width="14" height="14" viewBox="0 0 14 14"><path d="M7 1 V9.5 M3.6 6.2 L7 9.6 L10.4 6.2 M0.8 9.5 V12.8 H13.2 V9.5" fill="none" stroke="#b5b5b5" stroke-width="1"/></svg>
<svg class="a" style="left:772.5px;top:32.8px" width="14" height="14" viewBox="0 0 14 14"><path d="M0.6 0.6 H10.6 L12.9 2.9 V12.9 H0.6Z M3.4 0.6 V4.4 H9.6 V0.6" fill="none" stroke="#b0b0b0" stroke-width="1" stroke-linejoin="round"/><circle cx="6.6" cy="8.7" r="1.2" fill="none" stroke="#b0b0b0" stroke-width="0.9"/></svg>
<svg class="a" style="left:797px;top:32.5px" width="11" height="13" viewBox="0 0 11 13"><path d="M0.5 2.3 H10.5 M3.6 2.3 V0.6 H7.4 V2.3 M1.5 2.3 L2.2 12.3 H8.8 L9.5 2.3 M4.2 4.4 V10.6 M6.8 4.4 V10.6" fill="none" stroke="#b0b0b0" stroke-width="0.95"/></svg>

<!-- editor -->
<div class="a" id="gutter">
<div class="gl" style="top:-6.14px">18</div>
<div class="gl" style="top:4.04px">19</div>
<div class="fw" style="top:7.04px"></div>
<div class="gl" style="top:14.22px">20</div>
<div class="gl" style="top:24.40px">21</div>
<div class="gl" style="top:34.58px">22</div>
<div class="gl" style="top:44.76px">23</div>
<div class="gl" style="top:54.94px">24</div>
<div class="gl" style="top:65.12px">25</div>
<div class="fw" style="top:68.12px"></div>
<div class="gl" style="top:75.30px">26</div>
<div class="gl" style="top:85.48px">27</div>
<div class="gl" style="top:95.66px">28</div>
<div class="gl" style="top:105.84px">29</div>
<div class="gl" style="top:116.02px">30</div>
<div class="gl" style="top:126.20px">31</div>
<div class="gl" style="top:136.38px">32</div>
<div class="gl" style="top:146.56px">33</div>
<div class="gl" style="top:156.74px">34</div>
<div class="gl" style="top:166.92px">35</div>
<div class="gl" style="top:177.10px">36</div>
<div class="fw" style="top:180.10px"></div>
<div class="gl" style="top:187.28px">37</div>
<div class="gl" style="top:197.46px">38</div>
<div class="gl" style="top:207.64px">39</div>
<div class="gl" style="top:217.82px">40</div>
<div class="fw" style="top:220.82px"></div>
<div class="gl" style="top:228.00px">41</div>
<div class="gl" style="top:238.18px">42</div>
<div class="gl" style="top:248.36px">43</div>
<div class="gl" style="top:258.54px">44</div>
<div class="gl" style="top:268.72px">45</div>
<div class="fw" style="top:271.72px"></div>
<div class="gl" style="top:278.90px">46</div>
<div class="gl" style="top:289.08px">47</div>
<div class="gl" style="top:299.26px">48</div>
<div class="gl" style="top:309.44px">49</div>
<div class="fw" style="top:312.44px"></div>
<div class="gl" style="top:319.62px">50</div>
<div class="gl" style="top:329.80px">51</div>
<div class="gl" style="top:339.98px">52</div>
<div class="gl" style="top:350.16px">53</div>
<div class="gl" style="top:360.34px">54</div>
<div class="fw" style="top:363.34px"></div>
<div class="gl" style="top:370.52px">55</div>
<div class="gl" style="top:380.70px">56</div>
<div class="gl" style="top:390.88px">57</div>
<div class="gl" style="top:401.06px">58</div>
<div class="fw" style="top:404.06px"></div>
</div>
<div class="a" id="code">
<div class="cl" style="top:-6.14px"><span class="iv">¬</span></div>
<div class="cl" style="top:4.04px"><span style="color:#BC9458;font-style:italic">/**</span><span class="iv">·</span></div>
<div class="cl" style="top:14.22px"><span class="iv">·</span><span style="color:#BC9458;font-style:italic">*</span><span class="iv">·</span><span style="color:#BC9458;font-style:italic">Employees</span><span class="iv">·</span><span style="color:#BC9458;font-style:italic">generated</span><span class="iv">·</span><span style="color:#BC9458;font-style:italic">by</span><span class="iv">·</span><span style="color:#BC9458;font-style:italic">WaveMaker</span><span class="iv">·</span><span style="color:#BC9458;font-style:italic">Studio.</span><span class="iv">·</span></div>
<div class="cl" style="top:24.40px"><span class="iv">·</span><span style="color:#BC9458;font-style:italic">*/</span></div>
<div class="cl" style="top:34.58px"><span style="color:#FFFFFF">@TableTemporal(value</span><span class="iv">·</span><span style="color:#CC7833">=</span><span class="iv">·</span><span style="color:#FFFFFF">{TableTemporal.TemporalType.SYSTEM},</span><span class="iv">·</span><span style="color:#FFFFFF">historyClass</span><span class="iv">·</span><span style="color:#CC7833">=</span><span class="iv">·</span><span style="color:#FFFFFF">_EmployeesHistory.</span><span style="color:#CC7833">class</span><span style="color:#FFFFFF">)</span></div>
<div class="cl" style="top:44.76px"><span style="color:#FFFFFF">@Entity</span></div>
<div class="cl" style="top:54.94px"><span style="color:#FFFFFF">@Table(name</span><span class="iv">·</span><span style="color:#CC7833">=</span><span class="iv">·</span><span style="color:#A5C261">&quot;`EMPLOYEES`&quot;</span><span style="color:#FFFFFF">)</span></div>
<div class="cl" style="top:65.12px"><span style="color:#CC7833">public</span><span class="iv">·</span><span style="color:#CC7833">class</span><span class="iv">·</span><span style="color:#FFFFFF">Employees</span><span class="iv">·</span><span style="color:#CC7833">implements</span><span class="iv">·</span><span style="color:#FFFFFF">Serializable</span><span class="iv">·</span><span style="color:#FFFFFF">{</span></div>
<div class="cl" style="top:75.30px"><span class="iv">¬</span></div>
<div class="cl" style="top:85.48px"><span class="iv">·</span><span class="iv">·</span><span class="iv">·</span><span class="iv">·</span><span style="color:#CC7833">private</span><span class="iv">·</span><span style="color:#B83426">Integer</span><span class="iv">·</span><span style="color:#FFFFFF">employeeId;</span></div>
<div class="cl" style="top:95.66px"><span class="iv">·</span><span class="iv">·</span><span class="iv">·</span><span class="iv">·</span><span style="color:#CC7833">private</span><span class="iv">·</span><span style="color:#FFFFFF">Timestamp</span><span class="iv">·</span><span style="color:#FFFFFF">sysBegin;</span></div>
<div class="cl" style="top:105.84px"><span class="iv">·</span><span class="iv">·</span><span class="iv">·</span><span class="iv">·</span><span style="color:#CC7833">private</span><span class="iv">·</span><span style="color:#FFFFFF">Timestamp</span><span class="iv">·</span><span style="color:#FFFFFF">sysEnd;</span></div>
<div class="cl" style="top:116.02px"><span class="iv">·</span><span class="iv">·</span><span class="iv">·</span><span class="iv">·</span><span style="color:#CC7833">private</span><span class="iv">·</span><span style="color:#FFFFFF">Timestamp</span><span class="iv">·</span><span style="color:#FFFFFF">transId;</span></div>
<div class="cl" style="top:126.20px"><span class="iv">·</span><span class="iv">·</span><span class="iv">·</span><span class="iv">·</span><span style="color:#CC7833">private</span><span class="iv">·</span><span style="color:#B83426">String</span><span class="iv">·</span><span style="color:#FFFFFF">employeeName;</span></div>
<div class="cl" style="top:136.38px"><span class="iv">·</span><span class="iv">·</span><span class="iv">·</span><span class="iv">·</span><span style="color:#CC7833">private</span><span class="iv">·</span><span style="color:#B83426">String</span><span class="iv">·</span><span style="color:#FFFFFF">username;</span></div>
<div class="cl" style="top:146.56px"><span class="iv">¬</span></div>
<div class="cl" style="top:156.74px"><span class="iv">·</span><span class="iv">·</span><span class="iv">·</span><span class="iv">·</span><span style="color:#FFFFFF">@Id</span></div>
<div class="cl" style="top:166.92px"><span class="iv">·</span><span class="iv">·</span><span class="iv">·</span><span class="iv">·</span><span style="color:#FFFFFF">@Column(name</span><span class="iv">·</span><span style="color:#CC7833">=</span><span class="iv">·</span><span style="color:#A5C261">&quot;`EMPLOYEE_ID`&quot;</span><span style="color:#FFFFFF">,</span><span class="iv">·</span><span style="color:#FFFFFF">nullable</span><span class="iv">·</span><span style="color:#CC7833">=</span><span class="iv">·</span><span style="color:#6C99BB">false</span><span style="color:#FFFFFF">,</span><span class="iv">·</span><span style="color:#FFFFFF">scale</span><span class="iv">·</span><span style="color:#CC7833">=</span><span class="iv">·</span><span style="color:#6C99BB">0</span><span style="color:#FFFFFF">,</span><span class="iv">·</span><span style="color:#FFFFFF">precision</span><span class="iv">·</span><span style="color:#CC7833">=</span><span class="iv">·</span><span style="color:#6C99BB">10</span><span style="color:#FFFFFF">)</span></div>
<div class="cl" style="top:177.10px"><span class="iv">·</span><span class="iv">·</span><span class="iv">·</span><span class="iv">·</span><span style="color:#CC7833">public</span><span class="iv">·</span><span style="color:#B83426">Integer</span><span class="iv">·</span><span style="color:#FFFFFF">getEmployeeId()</span><span class="iv">·</span><span style="color:#FFFFFF">{</span></div>
<div class="cl" style="top:187.28px"><span class="iv">·</span><span class="iv">·</span><span class="iv">·</span><span class="iv">·</span><span class="iv">·</span><span class="iv">·</span><span class="iv">·</span><span class="iv">·</span><span style="color:#CC7833">return</span><span class="iv">·</span><span style="color:#CC7833">this</span><span style="color:#FFFFFF">.employeeId;</span></div>
<div class="cl" style="top:197.46px"><span class="iv">·</span><span class="iv">·</span><span class="iv">·</span><span class="iv">·</span><span style="color:#FFFFFF">}</span></div>
<div class="cl" style="top:207.64px"><span class="iv">¬</span></div>
<div class="cl" style="top:217.82px"><span class="iv">·</span><span class="iv">·</span><span class="iv">·</span><span class="iv">·</span><span style="color:#CC7833">public</span><span class="iv">·</span><span style="color:#CC7833">void</span><span class="iv">·</span><span style="color:#FFFFFF">setEmployeeId(</span><span style="color:#B83426">Integer</span><span class="iv">·</span><span style="color:#FFFFFF">employeeId)</span><span class="iv">·</span><span style="color:#FFFFFF">{</span></div>
<div class="cl" style="top:228.00px"><span class="iv">·</span><span class="iv">·</span><span class="iv">·</span><span class="iv">·</span><span class="iv">·</span><span class="iv">·</span><span class="iv">·</span><span class="iv">·</span><span style="color:#CC7833">this</span><span style="color:#FFFFFF">.employeeId</span><span class="iv">·</span><span style="color:#CC7833">=</span><span class="iv">·</span><span style="color:#FFFFFF">employeeId;</span></div>
<div class="cl" style="top:238.18px"><span class="iv">·</span><span class="iv">·</span><span class="iv">·</span><span class="iv">·</span><span style="color:#FFFFFF">}</span></div>
<div class="cl" style="top:248.36px"><span class="iv">¬</span></div>
<div class="cl" style="top:258.54px"><span class="iv">·</span><span class="iv">·</span><span class="iv">·</span><span class="iv">·</span><span style="color:#FFFFFF">@Column(name</span><span class="iv">·</span><span style="color:#CC7833">=</span><span class="iv">·</span><span style="color:#A5C261">&quot;`SYS_BEGIN`&quot;</span><span style="color:#FFFFFF">,</span><span class="iv">·</span><span style="color:#FFFFFF">nullable</span><span class="iv">·</span><span style="color:#CC7833">=</span><span class="iv">·</span><span style="color:#6C99BB">false</span><span style="color:#FFFFFF">,</span><span class="iv">·</span><span style="color:#FFFFFF">insertable</span><span class="iv">·</span><span style="color:#CC7833">=</span><span class="iv">·</span><span style="color:#6C99BB">false</span><span style="color:#FFFFFF">,</span><span class="iv">·</span><span style="color:#FFFFFF">updatable</span><span class="iv">·</span><span style="color:#CC7833">=</span><span class="iv">·</span><span style="color:#6C99BB">false</span><span style="color:#FFFFFF">)</span></div>
<div class="cl" style="top:268.72px"><span class="iv">·</span><span class="iv">·</span><span class="iv">·</span><span class="iv">·</span><span style="color:#CC7833">public</span><span class="iv">·</span><span style="color:#FFFFFF">Timestamp</span><span class="iv">·</span><span style="color:#FFFFFF">getSysBegin()</span><span class="iv">·</span><span style="color:#FFFFFF">{</span></div>
<div class="cl" style="top:278.90px"><span class="iv">·</span><span class="iv">·</span><span class="iv">·</span><span class="iv">·</span><span class="iv">·</span><span class="iv">·</span><span class="iv">·</span><span class="iv">·</span><span style="color:#CC7833">return</span><span class="iv">·</span><span style="color:#CC7833">this</span><span style="color:#FFFFFF">.sysBegin;</span></div>
<div class="cl" style="top:289.08px"><span class="iv">·</span><span class="iv">·</span><span class="iv">·</span><span class="iv">·</span><span style="color:#FFFFFF">}</span></div>
<div class="cl" style="top:299.26px"><span class="iv">¬</span></div>
<div class="cl" style="top:309.44px"><span class="iv">·</span><span class="iv">·</span><span class="iv">·</span><span class="iv">·</span><span style="color:#CC7833">public</span><span class="iv">·</span><span style="color:#CC7833">void</span><span class="iv">·</span><span style="color:#FFFFFF">setSysBegin(Timestamp</span><span class="iv">·</span><span style="color:#FFFFFF">sysBegin)</span><span class="iv">·</span><span style="color:#FFFFFF">{</span></div>
<div class="cl" style="top:319.62px"><span class="iv">·</span><span class="iv">·</span><span class="iv">·</span><span class="iv">·</span><span class="iv">·</span><span class="iv">·</span><span class="iv">·</span><span class="iv">·</span><span style="color:#CC7833">this</span><span style="color:#FFFFFF">.sysBegin</span><span class="iv">·</span><span style="color:#CC7833">=</span><span class="iv">·</span><span style="color:#FFFFFF">sysBegin;</span></div>
<div class="cl" style="top:329.80px"><span class="iv">·</span><span class="iv">·</span><span class="iv">·</span><span class="iv">·</span><span style="color:#FFFFFF">}</span></div>
<div class="cl" style="top:339.98px"><span class="iv">¬</span></div>
<div class="cl" style="top:350.16px"><span class="iv">·</span><span class="iv">·</span><span class="iv">·</span><span class="iv">·</span><span style="color:#FFFFFF">@Column(name</span><span class="iv">·</span><span style="color:#CC7833">=</span><span class="iv">·</span><span style="color:#A5C261">&quot;`SYS_END`&quot;</span><span style="color:#FFFFFF">,</span><span class="iv">·</span><span style="color:#FFFFFF">nullable</span><span class="iv">·</span><span style="color:#CC7833">=</span><span class="iv">·</span><span style="color:#6C99BB">false</span><span style="color:#FFFFFF">,</span><span class="iv">·</span><span style="color:#FFFFFF">insertable</span><span class="iv">·</span><span style="color:#CC7833">=</span><span class="iv">·</span><span style="color:#6C99BB">false</span><span style="color:#FFFFFF">,</span><span class="iv">·</span><span style="color:#FFFFFF">updatable</span><span class="iv">·</span><span style="color:#CC7833">=</span><span class="iv">·</span><span style="color:#6C99BB">false</span><span style="color:#FFFFFF">)</span></div>
<div class="cl" style="top:360.34px"><span class="iv">·</span><span class="iv">·</span><span class="iv">·</span><span class="iv">·</span><span style="color:#CC7833">public</span><span class="iv">·</span><span style="color:#FFFFFF">Timestamp</span><span class="iv">·</span><span style="color:#FFFFFF">getSysEnd()</span><span class="iv">·</span><span style="color:#FFFFFF">{</span></div>
<div class="cl" style="top:370.52px"><span class="iv">·</span><span class="iv">·</span><span class="iv">·</span><span class="iv">·</span><span class="iv">·</span><span class="iv">·</span><span class="iv">·</span><span class="iv">·</span><span style="color:#CC7833">return</span><span class="iv">·</span><span style="color:#CC7833">this</span><span style="color:#FFFFFF">.sysEnd;</span></div>
<div class="cl" style="top:380.70px"><span class="iv">·</span><span class="iv">·</span><span class="iv">·</span><span class="iv">·</span><span style="color:#FFFFFF">}</span></div>
<div class="cl" style="top:390.88px"><span class="iv">¬</span></div>
<div class="cl" style="top:401.06px"><span class="iv">·</span><span class="iv">·</span><span class="iv">·</span><span class="iv">·</span><span style="color:#CC7833">public</span><span class="iv">·</span><span style="color:#CC7833">void</span><span class="iv">·</span><span style="color:#FFFFFF">setSysEnd(Timestamp</span><span class="iv">·</span><span style="color:#FFFFFF">sysEnd)</span><span class="iv">·</span><span style="color:#FFFFFF">{</span></div>
</div>
<div class="a" style="left:272px;top:81.3px;width:468px;height:15.7px;border:2.1px solid #f0831e"></div>
<div class="a" id="vs"></div>
<div class="a" id="vthumb"></div>
<svg class="a" style="left:810.5px;top:54.3px" width="7" height="5" viewBox="0 0 7 5"><path d="M1.2 3.4 L3.5 1.1 L5.8 3.4Z" fill="#3c3c3c"/></svg>
<svg class="a" style="left:810.5px;top:452.5px" width="7" height="5" viewBox="0 0 7 5"><path d="M1.2 1.2 L3.5 3.5 L5.8 1.2Z" fill="#3c3c3c"/></svg>
<div class="a" id="hs"></div>
</body></html>
